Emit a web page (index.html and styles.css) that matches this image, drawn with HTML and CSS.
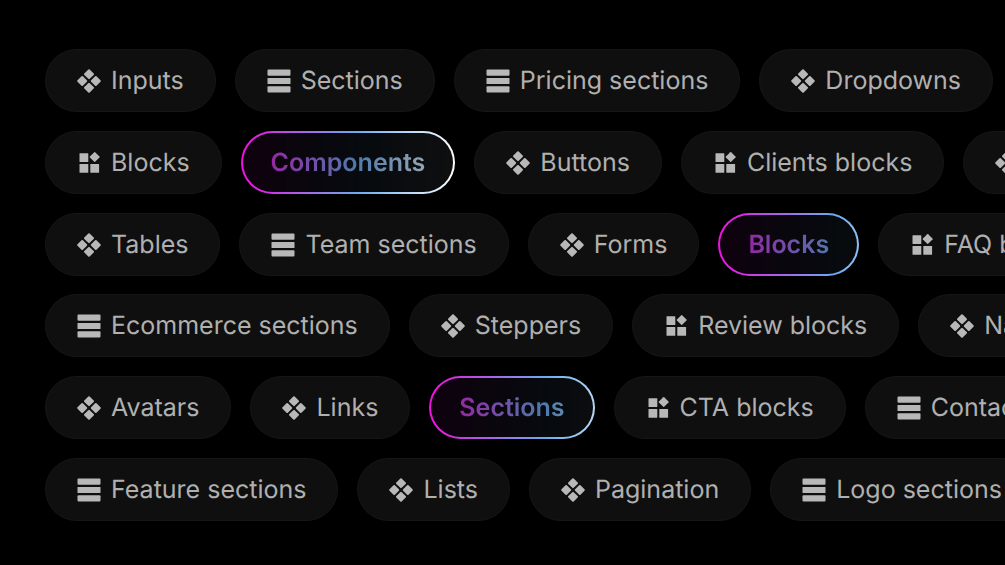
FILE: index.html
```
<!DOCTYPE html>
<html lang="en">
<head>
    <meta charset="UTF-8">
    <meta name="viewport" content="width=device-width, initial-scale=1.0">
    <title>UI Library</title>
    <link rel="stylesheet" href="styles.css">
</head>
<body>

<!-- Icon shapes shared by all tags -->
<svg class="sprite" aria-hidden="true">
    <symbol id="component" viewBox="0 0 24 24">
        <rect x="-3.8" y="-3.8" width="7.6" height="7.6" rx="1" transform="translate(12 5.2) rotate(45)"/>
        <rect x="-3.8" y="-3.8" width="7.6" height="7.6" rx="1" transform="translate(18.8 12) rotate(45)"/>
        <rect x="-3.8" y="-3.8" width="7.6" height="7.6" rx="1" transform="translate(12 18.8) rotate(45)"/>
        <rect x="-3.8" y="-3.8" width="7.6" height="7.6" rx="1" transform="translate(5.2 12) rotate(45)"/>
    </symbol>
    <symbol id="section" viewBox="0 0 24 24">
        <rect x="0.5" y="0.5" width="23" height="6.2" rx="1"/>
        <rect x="0.5" y="8.9" width="23" height="6.2" rx="0.6"/>
        <rect x="0.5" y="17.3" width="23" height="6.2" rx="1"/>
    </symbol>
    <symbol id="block" viewBox="0 0 24 24">
        <rect x="2.5" y="2.2" width="8.8" height="8.8" rx="0.6"/>
        <rect x="2.5" y="13" width="8.8" height="8.8" rx="0.6"/>
        <rect x="13.3" y="13" width="8.8" height="8.8" rx="0.6"/>
        <rect x="-3.7" y="-3.7" width="7.4" height="7.4" rx="0.6" transform="translate(17.7 6) rotate(45)"/>
    </symbol>
</svg>

<main class="tags">
    <div class="row">
        <a class="tag" href="#"><svg class="icon"><use href="#component"/></svg>Inputs</a>
        <a class="tag" href="#"><svg class="icon"><use href="#section"/></svg>Sections</a>
        <a class="tag" href="#"><svg class="icon"><use href="#section"/></svg>Pricing sections</a>
        <a class="tag" href="#"><svg class="icon"><use href="#component"/></svg>Dropdowns</a>
    </div>
    <div class="row">
        <a class="tag" href="#"><svg class="icon"><use href="#block"/></svg>Blocks</a>
        <a class="tag highlight" href="#"><span>Components</span></a>
        <a class="tag" href="#"><svg class="icon"><use href="#component"/></svg>Buttons</a>
        <a class="tag" href="#"><svg class="icon"><use href="#block"/></svg>Clients blocks</a>
        <a class="tag" href="#"><svg class="icon"><use href="#component"/></svg></a>
    </div>
    <div class="row">
        <a class="tag" href="#"><svg class="icon"><use href="#component"/></svg>Tables</a>
        <a class="tag" href="#"><svg class="icon"><use href="#section"/></svg>Team sections</a>
        <a class="tag" href="#"><svg class="icon"><use href="#component"/></svg>Forms</a>
        <a class="tag highlight" href="#"><span>Blocks</span></a>
        <a class="tag" href="#"><svg class="icon"><use href="#block"/></svg>FAQ blocks</a>
    </div>
    <div class="row">
        <a class="tag" href="#"><svg class="icon"><use href="#section"/></svg>Ecommerce sections</a>
        <a class="tag" href="#"><svg class="icon"><use href="#component"/></svg>Steppers</a>
        <a class="tag" href="#"><svg class="icon"><use href="#block"/></svg>Review blocks</a>
        <a class="tag" href="#"><svg class="icon"><use href="#component"/></svg>Navbars</a>
    </div>
    <div class="row">
        <a class="tag" href="#"><svg class="icon"><use href="#component"/></svg>Avatars</a>
        <a class="tag" href="#"><svg class="icon"><use href="#component"/></svg>Links</a>
        <a class="tag highlight" href="#"><span>Sections</span></a>
        <a class="tag" href="#"><svg class="icon"><use href="#block"/></svg>CTA blocks</a>
        <a class="tag" href="#"><svg class="icon"><use href="#section"/></svg>Contact sections</a>
    </div>
    <div class="row">
        <a class="tag" href="#"><svg class="icon"><use href="#section"/></svg>Feature sections</a>
        <a class="tag" href="#"><svg class="icon"><use href="#component"/></svg>Lists</a>
        <a class="tag" href="#"><svg class="icon"><use href="#component"/></svg>Pagination</a>
        <a class="tag" href="#"><svg class="icon"><use href="#section"/></svg>Logo sections</a>
    </div>
</main>

</body>
</html>
```
FILE: styles.css
```
* {
    box-sizing: border-box;
}
body {
    margin: 0;
    background-color: #000;
    font-family: Inter, "Liberation Sans", sans-serif;
    text-rendering: geometricPrecision;
}
.sprite {
    display: none;
}

/* Rows run off the right edge of the window */
.tags {
    display: flex;
    flex-direction: column;
    justify-content: space-between;
    min-height: 100vh;
    padding: 49px 0 44px 45px;
    overflow: hidden;
}
.row {
    display: flex;
    gap: 19px;
}

.tag {
    display: flex;
    flex-shrink: 0;
    align-items: center;
    gap: 10px;
    padding: 14px 31px 13px;
    border: 1px solid #161616;
    border-radius: 32px;
    background-color: #0f0f0f;
    color: #b0b0b0;
    font-size: 25px;
    line-height: 34px;
    text-decoration: none;
    white-space: nowrap;
}
.icon {
    width: 24px;
    height: 24px;
    fill: #b8b8b8;
}

/* Gradient outline: dark fill over the padding, full colour under the border */
.highlight {
    padding: 13px 28px 12px;
    border: 2px solid transparent;
    background:
        linear-gradient(rgba(0, 0, 0, 0.94), rgba(0, 0, 0, 0.94)) padding-box,
        linear-gradient(90deg, #f010e0 0, #6cabf0 116px, #fff 215px) border-box,
        #000 border-box;
    font-weight: 600;
}
.highlight span {
    background: linear-gradient(90deg, #f010e0 -30px, #6cabf0 86px, #fff 185px);
    -webkit-background-clip: text;
    background-clip: text;
    color: transparent;
    opacity: 0.7;
}
```
